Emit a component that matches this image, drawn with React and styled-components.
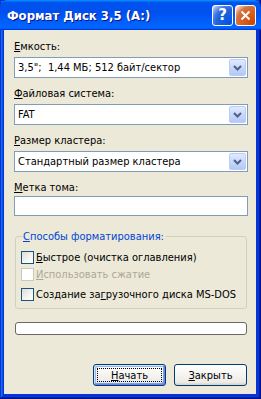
import styled, { createGlobalStyle } from "styled-components";

const Global = createGlobalStyle`
  html, body {
    margin: 0;
    padding: 0;
    background: #ffffff;
  }
  body {
    font-family: "DejaVu Sans Condensed", "Liberation Sans", sans-serif;
    font-size: 11px;
  }
`;

// Window frame
const Window = styled.div`
  width: 261px;
  height: 399px;
  box-sizing: border-box;
  display: flex;
  flex-direction: column;
  background: #0831d9;
  padding: 0 5px 5px 4px;
  box-shadow: inset -1px -1px #00138c, inset 1px 1px #0831d9, inset -2px -2px #001ea0,
    inset 2px 2px #166aee, inset -3px -3px #003bda, inset 3px 3px #0855dd;
`;

const TitleBar = styled.div`
  height: 30px;
  margin: 0 -5px 0 -4px;
  padding: 0 5px 0 7px;
  display: flex;
  align-items: center;
  border-radius: 7px 7px 0 0;
  background: linear-gradient(
    180deg,
    #0997ff 0%,
    #0053ee 8%,
    #0050ee 40%,
    #06f 88%,
    #06f 93%,
    #005bff 95%,
    #003dd7 96%,
    #003dd7 100%
  );
`;

const TitleText = styled.span`
  flex: 1;
  color: #fff;
  font-family: "DejaVu Sans Condensed", "Liberation Sans", sans-serif;
  font-weight: bold;
  font-size: 13px;
  text-shadow: 1px 1px #0f1089;
  letter-spacing: 0;
`;

const CaptionButton = styled.div`
  width: 21px;
  height: 21px;
  box-sizing: border-box;
  border: 1px solid #fff;
  border-radius: 3px;
  margin-left: 2px;
  display: flex;
  align-items: center;
  justify-content: center;
  color: #fff;
  font-family: "DejaVu Sans", sans-serif;
  font-weight: bold;
  font-size: 15px;
  background: ${(p) =>
    p.$close
      ? "radial-gradient(circle at 90% 90%, #cc4600 0%, #dc6527 55%, #cd7546 70%, #ffccb2 90%, #fff 100%)"
      : "radial-gradient(circle at 90% 90%, #0054e9 0%, #2263d5 55%, #4479e4 70%, #a3bbec 90%, #fff 100%)"};
`;

const Client = styled.div`
  flex: 1;
  background: #ece9d8;
  padding: 10px 8px 0 10px;
  display: flex;
  flex-direction: column;
  color: #000;
`;

const Field = styled.div`
  display: flex;
  flex-direction: column;
  margin-bottom: 9px;
`;

const Label = styled.div`
  height: 13px;
  line-height: 13px;
  margin-bottom: ${(p) => p.$gap ?? 4}px;
  white-space: pre;
`;

const Key = styled.span`
  text-decoration: underline;
  text-underline-offset: 1px;
`;

const Combo = styled.div`
  height: 21px;
  box-sizing: border-box;
  border: 1px solid #7f9db9;
  background: #fff;
  display: flex;
  align-items: center;
  padding: 1px;
`;

const ComboText = styled.span`
  flex: 1;
  padding-left: 2px;
  white-space: pre;
`;

const ComboButton = styled.div`
  width: 17px;
  height: 17px;
  box-sizing: border-box;
  border: 1px solid #b9cdf7;
  border-radius: 2px;
  background: linear-gradient(180deg, #e1eafe 0%, #c8d7fc 50%, #b4c8f6 100%);
  display: flex;
  align-items: center;
  justify-content: center;
`;

const TextBox = styled.div`
  height: 20px;
  box-sizing: border-box;
  border: 1px solid #7f9db9;
  background: #fff;
`;

const GroupBox = styled.div`
  position: relative;
  margin: 11px 1px 0 1px;
  border: 1px solid #d0d0bf;
  border-radius: 3px;
  padding: 14px 5px 7px 5px;
  display: flex;
  flex-direction: column;
`;

const Legend = styled.span`
  position: absolute;
  top: -7px;
  left: 6px;
  padding: 0 2px 0 1px;
  line-height: 13px;
  background: #ece9d8;
  color: #0046d5;
`;

const CheckRow = styled.div`
  display: flex;
  align-items: center;
  height: 13px;
  margin-top: ${(p) => p.$top ?? 0}px;
  color: ${(p) => (p.$disabled ? "#aca899" : "#000")};
`;

const CheckBox = styled.div`
  width: 13px;
  height: 13px;
  box-sizing: border-box;
  border: 1px solid ${(p) => (p.$disabled ? "#cac8bb" : "#1c5180")};
  background: ${(p) =>
    p.$disabled ? "#fff" : "linear-gradient(135deg, #dcdcd7 0%, #f5f5f1 60%, #fff 100%)"};
  margin-right: 2px;
`;

const Progress = styled.div`
  margin: 13px 1px 0 1px;
  height: 13px;
  box-sizing: border-box;
  border: 1px solid #686868;
  border-radius: 3px;
  background: #fff;
`;

const ButtonRow = styled.div`
  display: flex;
  justify-content: flex-end;
  gap: 8px;
  margin: 29px 1px 0 0;
`;

const Button = styled.div`
  width: 73px;
  height: 22px;
  box-sizing: border-box;
  border: 1px solid #003c74;
  border-radius: 3px;
  background: linear-gradient(180deg, #fff 0%, #ecebe6 86%, #d6d0c5 100%);
  display: flex;
  align-items: center;
  justify-content: center;
  position: relative;
  box-shadow: ${(p) =>
    p.$default ? "inset -1px -1px #6982ee, inset 1px 1px #cee7ff, inset -2px -2px #7e9de8, inset 2px 2px #98b8ea" : "none"};

  &::after {
    content: "";
    display: ${(p) => (p.$default ? "block" : "none")};
    position: absolute;
    inset: 3px;
    border: 1px dotted #000;
  }
`;

const Chevron = () => (
  <svg width="9" height="6" viewBox="0 0 9 6">
    <path d="M1 1 L4.5 4.5 L8 1" fill="none" stroke="#4d6185" strokeWidth="2" />
  </svg>
);

const CloseX = () => (
  <svg width="11" height="11" viewBox="0 0 11 11">
    <path d="M1.5 1.5 L9.5 9.5 M9.5 1.5 L1.5 9.5" stroke="#fff" strokeWidth="2" />
  </svg>
);

const combos = [
  { key: "Е", rest: "мкость:", value: '3,5";  1,44 МБ; 512 байт/сектор' },
  { key: "Ф", rest: "айловая система:", value: "FAT" },
  { key: "Р", rest: "азмер кластера:", value: "Стандартный размер кластера" },
];

const options = [
  { pre: "", key: "Б", rest: "ыстрое (очистка оглавления)", top: 0 },
  { pre: "", key: "И", rest: "спользовать сжатие", top: 4, disabled: true },
  { pre: "Создание за", key: "г", rest: "рузочного диска MS-DOS", top: 7 },
];

export default function App() {
  return (
    <>
      <Global />
      <Window>
        <TitleBar>
          <TitleText>Формат Диск 3,5 (A:)</TitleText>
          <CaptionButton>?</CaptionButton>
          <CaptionButton $close>
            <CloseX />
          </CaptionButton>
        </TitleBar>
        <Client>
          {combos.map((c) => (
            <Field key={c.rest}>
              <Label>
                <Key>{c.key}</Key>
                {c.rest}
              </Label>
              <Combo>
                <ComboText>{c.value}</ComboText>
                <ComboButton>
                  <Chevron />
                </ComboButton>
              </Combo>
            </Field>
          ))}
          <Field>
            <Label $gap={2}>
              <Key>М</Key>етка тома:
            </Label>
            <TextBox />
          </Field>

          <GroupBox>
            <Legend>
              <Key>С</Key>пособы форматирования:
            </Legend>
            {options.map((o) => (
              <CheckRow key={o.rest} $top={o.top} $disabled={o.disabled}>
                <CheckBox $disabled={o.disabled} />
                <span>
                  {o.pre}
                  <Key>{o.key}</Key>
                  {o.rest}
                </span>
              </CheckRow>
            ))}
          </GroupBox>

          <Progress />

          <ButtonRow>
            <Button $default>
              <span>
                <Key>Н</Key>ачать
              </span>
            </Button>
            <Button>
              <span>
                <Key>З</Key>акрыть
              </span>
            </Button>
          </ButtonRow>
        </Client>
      </Window>
    </>
  );
}
